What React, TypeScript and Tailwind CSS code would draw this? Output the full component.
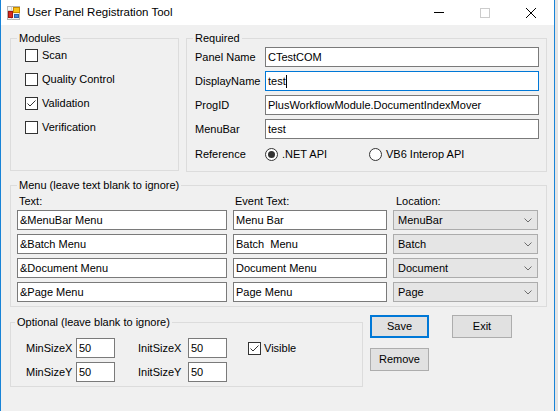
import React from "react";

function Check({ checked }: { checked?: boolean }) {
  return (
    <div className="w-[13px] h-[13px] border border-[#333333] bg-white flex items-center justify-center shrink-0">
      {checked && (
        <svg width="11" height="11" viewBox="0 0 11 11">
          <polyline points="1.5,5.5 4,8 9.5,2.5" fill="none" stroke="#333333" strokeWidth="1" />
        </svg>
      )}
    </div>
  );
}

function Radio({ checked }: { checked?: boolean }) {
  return (
    <div className="w-[13px] h-[13px] rounded-full border border-[#333333] bg-white flex items-center justify-center shrink-0">
      {checked && <div className="w-[7px] h-[7px] rounded-full bg-[#333333]" />}
    </div>
  );
}

function TextBox({ value, w, focus, caret }: { value: string; w: string; focus?: boolean; caret?: boolean }) {
  return (
    <div
      className={
        "h-[20px] bg-white border flex items-center pl-[2px] whitespace-pre overflow-hidden " +
        w +
        (focus ? " border-[#0078d7]" : " border-[#7a7a7a]")
      }
    >
      <span>{value}</span>
      {caret && <span className="w-[1px] h-[13px] bg-black" />}
    </div>
  );
}

function Combo({ value }: { value: string }) {
  return (
    <div className="w-[145px] h-[20px] bg-[#e5e5e5] border border-[#acacac] flex items-center pl-[4px] pr-[5px] pt-[1px]">
      <span className="flex-1">{value}</span>
      <svg width="8" height="5" viewBox="0 0 8 5">
        <polyline points="0.5,0.5 4,4 7.5,0.5" fill="none" stroke="#6d6d6d" strokeWidth="1" />
      </svg>
    </div>
  );
}

function AppIcon() {
  return (
    <svg width="13" height="14" viewBox="0 0 13 14">
      <rect x="0.5" y="0.5" width="12" height="13" fill="#f4f4f4" stroke="#b4b4b4" />
      <line x1="0.5" y1="4.5" x2="12.5" y2="4.5" stroke="#cfcfcf" />
      <line x1="4.5" y1="0.5" x2="4.5" y2="13.5" stroke="#cfcfcf" />
      <rect x="1.5" y="5.5" width="4" height="6" fill="#d8281e" stroke="#9e1810" />
      <rect x="6.5" y="1.5" width="6" height="5" fill="#f7c21a" stroke="#c88a00" />
      <rect x="7.5" y="8.5" width="4" height="3" fill="#3f86dc" stroke="#2a5fa8" />
    </svg>
  );
}

function Button({ label, w, focus }: { label: string; w: string; focus?: boolean }) {
  return (
    <div
      className={
        "h-[23px] bg-[#e1e1e1] flex items-center justify-center " +
        w +
        (focus ? " border-2 border-[#0078d7]" : " border border-[#adadad]")
      }
    >
      {label}
    </div>
  );
}

export default function App() {
  const menuRows = [
    ["&MenuBar Menu", "Menu Bar", "MenuBar"],
    ["&Batch Menu", "Batch  Menu", "Batch"],
    ["&Document Menu", "Document Menu", "Document"],
    ["&Page Menu", "Page Menu", "Page"],
  ];
  return (
    <div className="w-[558px] h-[411px] bg-[#e4e4e4] overflow-hidden font-['Liberation_Sans',Arial,sans-serif] text-[11px] leading-[13px] text-black">
      <div className="w-[555px] h-full border-x border-[#1883d7] bg-[#f0f0f0] flex flex-col">
        {/* Title bar */}
        <div className="h-[25px] bg-white flex items-center shrink-0">
          <div className="ml-[6px]">
            <AppIcon />
          </div>
          <div className="ml-[7px] text-[11.5px]">User Panel Registration Tool</div>
          <div className="flex-1" />
          <div className="w-[46px] h-full flex items-center justify-center">
            <div className="w-[10px] h-[1px] bg-black" />
          </div>
          <div className="w-[46px] h-full flex items-center justify-center">
            <div className="w-[10px] h-[10px] border border-[#cccccc]" />
          </div>
          <div className="w-[46px] h-full flex items-center justify-center">
            <svg width="10" height="10" viewBox="0 0 10 10">
              <line x1="0" y1="0" x2="10" y2="10" stroke="#000" strokeWidth="1" />
              <line x1="10" y1="0" x2="0" y2="10" stroke="#000" strokeWidth="1" />
            </svg>
          </div>
        </div>

        {/* Row 1 */}
        <div className="flex mt-[7px]">
          <fieldset className="ml-[9px] w-[169px] h-[139px] border border-[#dcdcdc]">
            <legend className="ml-[6px] px-[2px] leading-[13px]">Modules</legend>
            <div className="pt-[4px] pl-[14px] flex flex-col gap-[11px]">
              {[
                ["Scan", false],
                ["Quality Control", false],
                ["Validation", true],
                ["Verification", false],
              ].map(([l, c]) => (
                <div key={l as string} className="h-[13px] flex items-center gap-[4px]">
                  <Check checked={c as boolean} />
                  <span>{l as string}</span>
                </div>
              ))}
            </div>
          </fieldset>
          <fieldset className="ml-[7px] w-[361px] h-[140px] border border-[#dcdcdc]">
            <legend className="ml-[6px] px-[2px] leading-[13px]">Required</legend>
            <div className="pt-[2px] pl-[8px] flex flex-col gap-[4px]">
              <div className="h-[20px] flex items-center">
                <span className="w-[70px]">Panel Name</span>
                <TextBox value="CTestCOM" w="w-[274px]" />
              </div>
              <div className="h-[20px] flex items-center">
                <span className="w-[70px]">DisplayName</span>
                <TextBox value="test" w="w-[274px]" focus caret />
              </div>
              <div className="h-[20px] flex items-center">
                <span className="w-[70px]">ProgID</span>
                <TextBox value="PlusWorkflowModule.DocumentIndexMover" w="w-[274px]" />
              </div>
              <div className="h-[20px] flex items-center">
                <span className="w-[70px]">MenuBar</span>
                <TextBox value="test" w="w-[274px]" />
              </div>
              <div className="h-[20px] mt-[1px] flex items-center">
                <span className="w-[70px]">Reference</span>
                <div className="w-[104px] flex items-center gap-[4px]">
                  <Radio checked />
                  <span>.NET API</span>
                </div>
                <div className="flex items-center gap-[4px]">
                  <Radio />
                  <span>VB6 Interop API</span>
                </div>
              </div>
            </div>
          </fieldset>
        </div>

        {/* Menu */}
        <fieldset className="mt-[7px] ml-[9px] w-[537px] h-[128px] border border-[#dcdcdc]">
          <legend className="ml-[6px] px-[2px] leading-[13px]">Menu (leave text blank to ignore)</legend>
          <div className="pt-[3px] pl-[6px]">
            <div className="h-[13px] flex items-center">
              <span className="w-[216px] pl-[2px]">Text:</span>
              <span className="w-[160px] pl-[2px]">Event Text:</span>
              <span className="pl-[3px]">Location:</span>
            </div>
            <div className="mt-[2px] flex flex-col gap-[4px]">
              {menuRows.map(([a, b, c]) => (
                <div key={a} className="flex gap-[6px]">
                  <TextBox value={a} w="w-[210px]" />
                  <TextBox value={b} w="w-[154px]" />
                  <Combo value={c} />
                </div>
              ))}
            </div>
          </div>
        </fieldset>

        {/* Bottom row */}
        <div className="flex items-start">
          <fieldset className="mt-[9px] ml-[9px] w-[353px] h-[71px] border border-[#dcdcdc]">
            <legend className="ml-[4px] px-[2px] leading-[13px]">Optional (leave blank to ignore)</legend>
            <div className="pt-[9px] pl-[15px] flex flex-col gap-[4px]">
              <div className="h-[20px] flex items-center">
                <span className="w-[50px]">MinSizeX</span>
                <TextBox value="50" w="w-[39px]" />
                <span className="ml-[23px] w-[50px]">InitSizeX</span>
                <TextBox value="50" w="w-[39px]" />
                <div className="ml-[21px] flex items-center gap-[3px]">
                  <Check checked />
                  <span>Visible</span>
                </div>
              </div>
              <div className="h-[20px] flex items-center">
                <span className="w-[50px]">MinSizeY</span>
                <TextBox value="50" w="w-[39px]" />
                <span className="ml-[23px] w-[50px]">InitSizeY</span>
                <TextBox value="50" w="w-[39px]" />
              </div>
            </div>
          </fieldset>
          <div className="ml-[7px] mt-[8px] flex flex-col gap-[10px]">
            <Button label="Save" w="w-[59px]" focus />
            <Button label="Remove" w="w-[59px]" />
          </div>
          <div className="ml-[23px] mt-[8px]">
            <Button label="Exit" w="w-[60px]" />
          </div>
        </div>
      </div>
    </div>
  );
}
